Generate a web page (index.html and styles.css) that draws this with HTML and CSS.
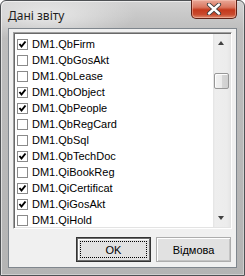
FILE: index.html
```html
<!DOCTYPE html>
<html lang="uk">
<head>
    <meta charset="UTF-8">
    <title>Дані звіту</title>
    <link rel="stylesheet" href="styles.css">
</head>
<body>
    <div class="window">
        <div class="titlebar">
            <span class="title">Дані звіту</span>
            <button class="close" type="button">
                <svg width="16" height="12" viewBox="0 0 16 12">
                    <path d="M3 1.5 L13 10.5 M13 1.5 L3 10.5" stroke="#3b3b3b" stroke-width="4.2" stroke-linecap="round"/>
                    <path d="M3 1.5 L13 10.5 M13 1.5 L3 10.5" stroke="#fff" stroke-width="2.4" stroke-linecap="round"/>
                </svg>
            </button>
        </div>

        <div class="client">
            <div class="listbox">
                <ul class="items">
                    <li class="item checked"><span class="box"></span>DM1.QbFirm</li>
                    <li class="item"><span class="box"></span>DM1.QbGosAkt</li>
                    <li class="item"><span class="box"></span>DM1.QbLease</li>
                    <li class="item checked"><span class="box"></span>DM1.QbObject</li>
                    <li class="item checked"><span class="box"></span>DM1.QbPeople</li>
                    <li class="item"><span class="box"></span>DM1.QbRegCard</li>
                    <li class="item"><span class="box"></span>DM1.QbSql</li>
                    <li class="item checked"><span class="box"></span>DM1.QbTechDoc</li>
                    <li class="item"><span class="box"></span>DM1.QiBookReg</li>
                    <li class="item checked"><span class="box"></span>DM1.QiCertificat</li>
                    <li class="item checked"><span class="box"></span>DM1.QiGosAkt</li>
                    <li class="item"><span class="box"></span>DM1.QiHold</li>
                </ul>
                <div class="scrollbar">
                    <div class="arrow up"></div>
                    <div class="track">
                        <div class="thumb"></div>
                    </div>
                    <div class="arrow down"></div>
                </div>
            </div>

            <div class="buttons">
                <button class="btn default" type="button"><span class="focus">OK</span></button>
                <button class="btn" type="button">Відмова</button>
            </div>
        </div>
    </div>
</body>
</html>
```

FILE: styles.css
```css
body {
    margin: 0;
    padding: 0;
    background: #fff;
    font-family: "Liberation Sans", Arial, sans-serif;
}
.window {
    box-sizing: border-box;
    width: 245px;
    height: 276px;
    display: flex;
    flex-direction: column;
    padding: 0 7px 7px 7px;
    border: 1px solid #4e5154;
    border-radius: 6px 6px 0 0;
    background:
        radial-gradient(ellipse 90px 26px at 45px 14px, rgba(235, 235, 235, 0.9), rgba(235, 235, 235, 0) 100%),
        linear-gradient(to bottom, #d2d2d2 0, #bdbdbd 30px, #b4b4b4 100%);
    box-shadow: inset 1px 1px 0 rgba(255, 255, 255, 0.55), inset -1px -1px 0 rgba(255, 255, 255, 0.35);
}
.titlebar {
    height: 27px;
    display: flex;
    justify-content: space-between;
    align-items: flex-start;
}
.title {
    margin-top: 6px;
    font-family: "Noto Sans", "DejaVu Sans", sans-serif;
    font-size: 12px;
    color: #1e1e1e;
}
.close {
    width: 46px;
    height: 19px;
    margin: -1px 0 0 0;
    padding: 0;
    border: 1px solid #5e2116;
    border-top: none;
    border-radius: 0 0 5px 5px;
    display: flex;
    align-items: center;
    justify-content: center;
    background: linear-gradient(to bottom, #e9a898 0, #da7760 40%, #c4391c 55%, #c94a2d 80%, #dd8a6d 100%);
    box-shadow: inset 0 0 0 1px rgba(255, 210, 195, 0.45);
}
.client {
    flex: 1;
    display: flex;
    flex-direction: column;
    padding: 3px 4px 5px 4px;
    border: 1px solid #7f868d;
    background: #f0f0f0;
}
.listbox {
    height: 197px;
    box-sizing: border-box;
    display: flex;
    border: 1px solid;
    border-color: #a0a0a0 #fff #fff #a0a0a0;
    box-shadow: inset 1px 1px 0 #696969, inset -1px -1px 0 #e3e3e3;
    background: #fff;
    padding: 1px;
}
.items {
    flex: 1;
    list-style: none;
    margin: 0;
    padding: 2px 0 0 2px;
    overflow: hidden;
}
.item {
    height: 16px;
    display: flex;
    align-items: center;
    font-size: 11px;
    color: #000;
    white-space: nowrap;
}
.box {
    box-sizing: border-box;
    width: 11px;
    height: 11px;
    margin-right: 4px;
    border: 1px solid #8a8a8a;
    background: #fff;
    flex-shrink: 0;
}
.item.checked .box {
    background: #fff url("data:image/svg+xml;utf8,<svg xmlns='http://www.w3.org/2000/svg' width='9' height='9'><path d='M1.5 4 L3.5 6.5 L7.5 1.5' fill='none' stroke='black' stroke-width='2'/></svg>") no-repeat center;
}
.scrollbar {
    width: 17px;
    display: flex;
    flex-direction: column;
    background: linear-gradient(to right, #e3e3e3 0, #eeeeee 2px, #ececec 14px, #e6e6e6 100%);
}
.arrow {
    height: 17px;
    position: relative;
}
.arrow::after {
    content: "";
    position: absolute;
    left: 5px;
    width: 0;
    height: 0;
    border-left: 3.5px solid transparent;
    border-right: 3.5px solid transparent;
}
.arrow.up::after {
    top: 7px;
    border-bottom: 4px solid #404040;
}
.arrow.down::after {
    top: 6px;
    border-top: 4px solid #404040;
}
.track {
    flex: 1;
    padding-top: 22px;
}
.thumb {
    box-sizing: border-box;
    width: 15px;
    height: 16px;
    margin-left: 1px;
    border: 1px solid #979797;
    border-radius: 2px;
    background: linear-gradient(to right, #f2f2f2 0, #ebebeb 50%, #d6d6d6 51%, #cfcfcf 100%);
    box-shadow: inset 1px 1px 0 #fdfdfd;
}
.buttons {
    display: flex;
    justify-content: flex-end;
    gap: 5px;
    margin-top: 8px;
    padding-right: 1px;
}
.btn {
    box-sizing: border-box;
    width: 75px;
    height: 25px;
    padding: 0;
    border: 1px solid #adadad;
    border-radius: 0;
    background: #e1e1e1;
    box-shadow: inset 1px 1px 0 #fff, inset -1px -1px 0 #c4c4c4;
    font-family: "Liberation Sans", Arial, sans-serif;
    font-size: 11px;
    color: #000;
}
.btn.default {
    border: 1px solid #333;
    box-shadow: inset 0 0 0 1px #6d6d6d, inset 2px 2px 0 #fff;
    display: flex;
    align-items: center;
    justify-content: center;
}
.focus {
    box-sizing: border-box;
    width: 67px;
    height: 17px;
    border: 1px dotted #000;
    display: flex;
    align-items: center;
    justify-content: center;
}
```
